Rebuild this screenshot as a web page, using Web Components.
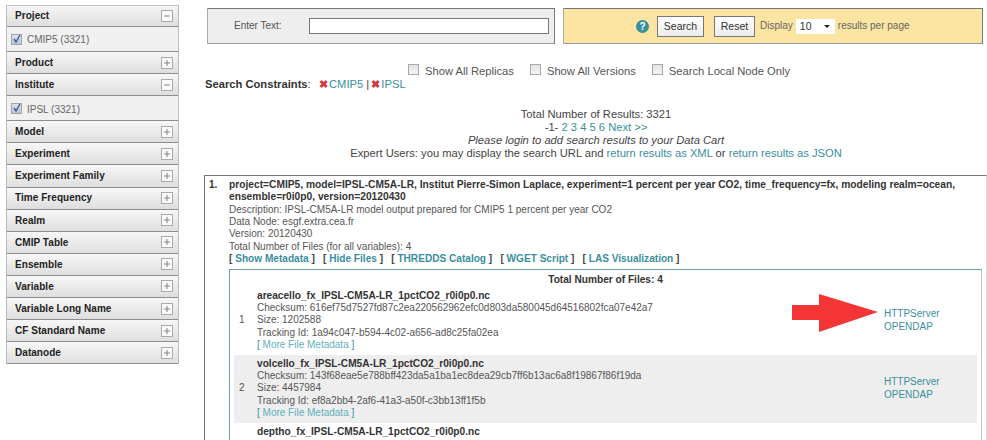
<!DOCTYPE html>
<html>
<head>
<meta charset="utf-8">
<title>Search</title>
<style>
  html, body { margin: 0; height: 100%; overflow: hidden; background: #fff; }
  body { font: 10px/12.4px "Liberation Sans", Arial, sans-serif; color: #555; }
  search-page { width: 987px; height: 440px; }
</style>
</head>
<body>
<search-page>
  <facet-list slot="side">
    <facet-group label="Project" open value="CMIP5 (3321)"></facet-group>
    <facet-group label="Product"></facet-group>
    <facet-group label="Institute" open value="IPSL (3321)"></facet-group>
    <facet-group label="Model"></facet-group>
    <facet-group label="Experiment"></facet-group>
    <facet-group label="Experiment Family"></facet-group>
    <facet-group label="Time Frequency"></facet-group>
    <facet-group label="Realm"></facet-group>
    <facet-group label="CMIP Table"></facet-group>
    <facet-group label="Ensemble"></facet-group>
    <facet-group label="Variable"></facet-group>
    <facet-group label="Variable Long Name"></facet-group>
    <facet-group label="CF Standard Name"></facet-group>
    <facet-group label="Datanode"></facet-group>
  </facet-list>

  <search-bar></search-bar>
  <search-options></search-options>
  <search-summary></search-summary>

  <result-card index="1.">
    <span slot="title">project=CMIP5, model=IPSL-CM5A-LR, Institut Pierre-Simon Laplace, experiment=1 percent per year CO2, time_frequency=fx, modeling realm=ocean, ensemble=r0i0p0, version=20120430</span>
    <span slot="meta">Description: IPSL-CM5A-LR model output prepared for CMIP5 1 percent per year CO2</span>
    <span slot="meta">Data Node: esgf.extra.cea.fr</span>
    <span slot="meta">Version: 20120430</span>
    <span slot="meta">Total Number of Files (for all variables): 4</span>
    <file-row num="1" name="areacello_fx_IPSL-CM5A-LR_1pctCO2_r0i0p0.nc" checksum="616ef75d7527fd87c2ea220562962efc0d803da580045d64516802fca07e42a7" size="1202588" tracking="1a94c047-b594-4c02-a656-ad8c25fa02ea"></file-row>
    <file-row num="2" shaded name="volcello_fx_IPSL-CM5A-LR_1pctCO2_r0i0p0.nc" checksum="143f68eae5e788bff423da5a1ba1ec8dea29cb7ff6b13ac6a8f19867f86f19da" size="4457984" tracking="ef8a2bb4-2af6-41a3-a50f-c3bb13ff1f5b"></file-row>
    <file-row num="3" name="deptho_fx_IPSL-CM5A-LR_1pctCO2_r0i0p0.nc"></file-row>
  </result-card>
  <call-arrow></call-arrow>
</search-page>

<script>
class SearchPage extends HTMLElement {
	constructor() {
		super();
		this.attachShadow({ mode: "open" });
		this.shadowRoot.innerHTML = `
      <style>
        :host { display: grid; grid-template-columns: 173px 1fr; column-gap: 25px; padding: 5px 0 0 6px; box-sizing: border-box; position: relative; overflow: hidden; }
        .main { min-width: 0; }
      </style>
      <slot name="side"></slot>
      <div class="main"><slot></slot></div>
    `;
	}
}

class FacetList extends HTMLElement {
	constructor() {
		super();
		this.attachShadow({ mode: "open" });
		this.shadowRoot.innerHTML = `
      <style>
        :host { display: block; width: 173px; align-self: start; border-left: 1px solid #bbb; border-right: 1px solid #bbb; box-sizing: border-box; }
      </style>
      <slot></slot>
    `;
	}
}

class FacetGroup extends HTMLElement {
	constructor() {
		super();
		this.attachShadow({ mode: "open" });
	}

	connectedCallback() {
		const open = this.hasAttribute("open");
		const value = this.getAttribute("value") || "";
		const bar = open
			? '<path d="M3 6.5h7" stroke="#888" stroke-width="1.4"/>'
			: '<path d="M2.5 6.5h8M6.5 2.5v8" stroke="#888" stroke-width="1.4"/>';
		this.shadowRoot.innerHTML = `
      <style>
        :host { display: block; }
        :host(:first-child) .head { box-shadow: inset 0 1px 0 #c4c4c4; }
        .head { height: 21.1px; display: flex; align-items: center; justify-content: space-between; padding: 0 5px 0 8px; background: linear-gradient(#f7f7f7, #dedede); border-bottom: 1px solid #8e8e8e; font-weight: bold; font-size: 10px; color: #222; letter-spacing: 0.05px; }
        .head span { position: relative; top: 0.5px; }
        svg.toggle { background: #fafafa; border: 1px solid #aaa; box-sizing: border-box; display: block; width: 12px; height: 12px; }
        .body { height: 21px; padding-top: 3px; background: #f0f0f0; border-bottom: 1px solid #8e8e8e; display: flex; align-items: center; gap: 5px; padding-left: 4px; color: #666; }
        .box { width: 11px; height: 11px; box-sizing: border-box; background: linear-gradient(#dfe3ec, #b9c3da); border: 1px solid #a5a5a5; position: relative; margin-top: -3px; }
        .box svg { position: absolute; left: 0; top: -1px; }
      </style>
      <div class="head"><span>${this.getAttribute("label")}</span>
        <svg class="toggle" viewBox="0 0 13 13" fill="none">${bar}</svg></div>
      ${open ? `<div class="body"><span class="box"><svg width="10" height="10" viewBox="0 0 10 10" fill="none"><path d="M2 5l2 3 4-7" stroke="#3c5a96" stroke-width="1.4"/></svg></span><span>${value}</span></div>` : ""}
    `;
	}
}

class SearchBar extends HTMLElement {
	constructor() {
		super();
		this.attachShadow({ mode: "open" });
		this.shadowRoot.innerHTML = `
      <style>
        :host { display: flex; gap: 8px; height: 36px; margin-top: 3px; margin-left: 3px; width: 776px; }
        .panel { box-sizing: border-box; height: 36px; border: 1px solid #777; border-bottom-color: #999; border-left-color: #aaa; display: flex; align-items: center; }
        .text { width: 348px; background: #eee; padding-left: 26px; gap: 27px; }
        .field { width: 240px; height: 16px; border: 1px solid #777; background: #fff; box-sizing: border-box; }
        .go { width: 420px; background: #fce5a2; padding-left: 72px; color: #666; }
        .help { width: 13px; height: 13px; border-radius: 50%; background: #3a8f9c; color: #fff; font: bold 10px/13px "Liberation Sans", sans-serif; text-align: center; margin-right: 8px; }
        button { font: 10.5px "Liberation Sans", sans-serif; color: #333; height: 21px; padding: 0; border: 1px solid #777; background: linear-gradient(#fff, #ececec); }
        .s { width: 47px; margin-right: 10px; }
        .r { width: 41px; margin-right: 5px; }
        .sel { width: 39px; height: 15px; background: #fff; margin: 0 3px; display: flex; align-items: center; justify-content: space-between; padding: 0 5px 0 4px; box-sizing: border-box; color: #333; font-size: 10.5px; }
        .sel i { border: 3px solid transparent; border-top: 3px solid #222; border-bottom: 0; border-left-width: 3.5px; border-right-width: 3.5px; }
      </style>
      <div class="panel text"><span>Enter Text:</span><span class="field"></span></div>
      <div class="panel go">
        <span class="help">?</span>
        <button class="s">Search</button><button class="r">Reset</button>
        <span>Display</span><span class="sel">10<i></i></span><span>results per page</span>
      </div>
    `;
	}
}

class SearchOptions extends HTMLElement {
	constructor() {
		super();
		this.attachShadow({ mode: "open" });
		this.shadowRoot.innerHTML = `
      <style>
        :host { display: block; font-size: 11.2px; }
        .checks { display: flex; padding-left: 204px; margin-top: 20px; height: 14px; align-items: center; gap: 16px; color: #555; }
        .checks label { display: flex; align-items: center; gap: 6px; }
        .checks i { width: 11px; height: 11px; box-sizing: border-box; border: 1px solid #aaa; background: linear-gradient(#e4e4e4, #f4f4f4); margin-top: -3px; }
        .constraints { padding-left: 1px; margin-top: -1px; height: 15px; line-height: 15px; color: #444; }
        b { color: #333; }
        a { color: #3a8f9c; text-decoration: none; }
        .x { color: #cf3a44; font-weight: bold; font-size: 11px; margin-right: 1px; margin-left: -1px; }
      </style>
      <div class="checks">
        <label><i></i>Show All Replicas</label>
        <label><i></i>Show All Versions</label>
        <label><i></i>Search Local Node Only</label>
      </div>
      <div class="constraints"><b>Search Constraints</b>: &nbsp;
        <span class="x">✖</span><a>CMIP5</a> | <span class="x">✖</span><a>IPSL</a></div>
    `;
	}
}

class SearchSummary extends HTMLElement {
	constructor() {
		super();
		this.attachShadow({ mode: "open" });
		this.shadowRoot.innerHTML = `
      <style>
        :host { display: block; width: 780px; margin-top: 15.5px; margin-left: 2px; text-align: center; font-size: 11.2px; line-height: 13.3px; color: #444; }
        a { color: #3a8f9c; text-decoration: none; }
      </style>
      <div>Total Number of Results: 3321</div>
      <div>-1- <a>2</a> <a>3</a> <a>4</a> <a>5</a> <a>6</a> <a>Next &gt;&gt;</a></div>
      <div><em>Please login to add search results to your Data Cart</em></div>
      <div>Expert Users: you may display the search URL and <a>return results as XML</a> or <a>return results as JSON</a></div>
    `;
	}
}

class ResultCard extends HTMLElement {
	constructor() {
		super();
		this.attachShadow({ mode: "open" });
	}

	connectedCallback() {
		this.shadowRoot.innerHTML = `
      <style>
        :host { display: grid; grid-template-columns: 21px 1fr; width: 783px; margin-top: 14px; box-sizing: border-box; padding: 3px 0 0 3px; border: 1px solid #777; border-right: 1px solid #ddd; border-bottom: 0; height: 270px; line-height: 12.4px; }
        .num { font-weight: bold; color: #333; padding-left: 1px; }
        .title { font-weight: bold; color: #333; font-size: 10.23px; }
        ::slotted([slot="meta"]) { display: block; }
        .links { display: flex; gap: 8.2px; font-weight: bold; font-size: 10.1px; color: #444; }
        .links a { color: #3a8f9c; }
        .files { width: 753px; box-sizing: border-box; border: 1px solid #6a9bab; border-right-color: #afc9d1; margin-top: 3px; padding: 4px 4px 0 4px; height: 200px; }
        .count { text-align: center; font-weight: bold; color: #333; font-size: 10.15px; height: 13px; }
      </style>
      <div class="num">${this.getAttribute("index")}</div>
      <div>
        <div class="title"><slot name="title"></slot></div>
        <slot name="meta"></slot>
        <div class="links">
          <span>[ <a>Show Metadata</a> ]</span><span>[ <a>Hide Files</a> ]</span><span>[ <a>THREDDS Catalog</a> ]</span><span>[ <a>WGET Script</a> ]</span><span>[ <a>LAS Visualization</a> ]</span>
        </div>
        <div class="files">
          <div class="count">Total Number of Files: 4</div>
          <slot></slot>
        </div>
      </div>
    `;
	}
}

class FileRow extends HTMLElement {
	constructor() {
		super();
		this.attachShadow({ mode: "open" });
	}

	connectedCallback() {
		const get = (k) => this.getAttribute(k);
		const full = this.hasAttribute("checksum");
		this.shadowRoot.innerHTML = `
      <style>
        :host { display: grid; grid-template-columns: 23px 627px 1fr; align-items: center; height: 68px; color: #555; line-height: 12.2px; }
        :host([shaded]) { background: #eee; }
        .n { padding-left: 5px; }
        .name { font-weight: bold; font-size: 10.15px; color: #333; }
        .more { color: #3a8f9c; }
        .more a { color: #5fb0bd; }
        .dl { color: #3a8f9c; }
        .dl a { display: block; }
        .solo { align-self: start; padding-top: 3px; }
      </style>
      <div class="n">${full ? get("num") : ""}</div>
      <div class="${full ? "" : "solo"}">
        <div class="name">${get("name")}</div>
        ${full ? `<div>Checksum: ${get("checksum")}</div>
        <div>Size: ${get("size")}</div>
        <div>Tracking Id: ${get("tracking")}</div>
        <div class="more">[ <a>More File Metadata</a> ]</div>` : ""}
      </div>
      <div class="dl">${full ? "<a>HTTPServer</a><a>OPENDAP</a>" : ""}</div>
    `;
	}
}

class CallArrow extends HTMLElement {
	constructor() {
		super();
		this.attachShadow({ mode: "open" });
		this.shadowRoot.innerHTML = `
      <style>
        :host { position: absolute; left: 792px; top: 294px; width: 86px; height: 38px; display: block; }
      </style>
      <svg width="86" height="38" viewBox="0 0 86 38"><path d="M0 11H27V0L86 18 27 38V26H0Z" fill="#f33535"/></svg>
    `;
	}
}

customElements.define("search-page", SearchPage);
customElements.define("facet-list", FacetList);
customElements.define("facet-group", FacetGroup);
customElements.define("search-bar", SearchBar);
customElements.define("search-options", SearchOptions);
customElements.define("search-summary", SearchSummary);
customElements.define("result-card", ResultCard);
customElements.define("file-row", FileRow);
customElements.define("call-arrow", CallArrow);
</script>
</body>
</html>
